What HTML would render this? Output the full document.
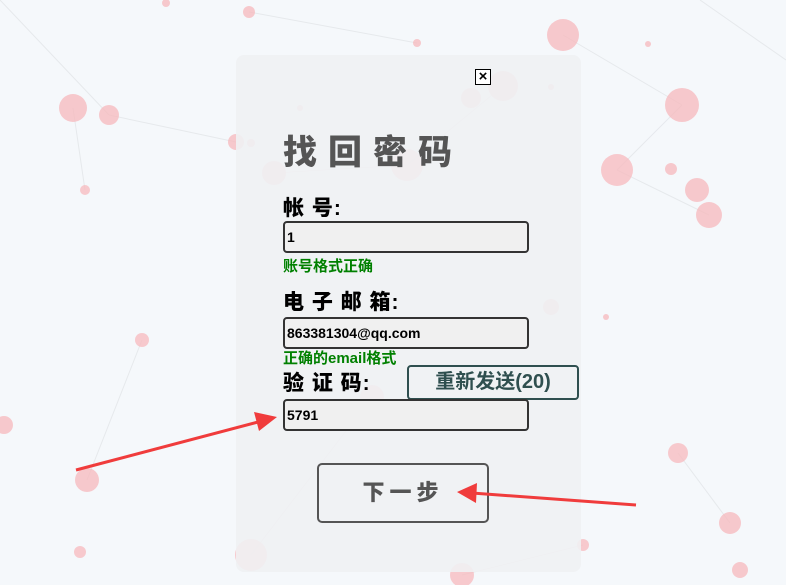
<!DOCTYPE html>
<html><head><meta charset="utf-8"><style>
*{margin:0;padding:0;box-sizing:border-box}
body{width:786px;height:585px;overflow:hidden;background:#f5f8fb;position:relative;font-family:"Liberation Sans","Noto Sans CJK SC",sans-serif}
svg.bg{position:absolute;left:0;top:0}
.panel{position:absolute;left:236px;top:55px;width:345px;height:517px;background:rgba(240,241,243,0.9);border-radius:8px}
.abs{position:absolute}
.close{left:475px;top:69px;width:16px;height:16px;border:1.5px solid #000;background:#fff;font-size:15px;line-height:13px;text-align:center;font-weight:900}
h1{position:absolute;left:283px;top:130px;font-size:34px;color:#555;letter-spacing:11px;font-weight:900;line-height:46px;white-space:nowrap}
.lbl{position:absolute;left:283px;font-size:21px;font-weight:900;color:#000;letter-spacing:1px;line-height:26px;white-space:nowrap}
.inp{position:absolute;left:283px;width:246px;height:32px;border:2px solid #333;border-radius:4px;background:#f0f0f0;font-size:14px;font-weight:bold;padding-left:2px;line-height:28px}
.ok{position:absolute;left:283px;font-size:15px;color:#008000;font-weight:bold;line-height:16px;white-space:nowrap}
.resend{left:407px;top:365px;width:172px;height:35px;border:2px solid #2f4f4f;border-radius:4px;font-size:20px;font-weight:bold;color:#2f4f4f;text-align:center;line-height:31px}
.next{left:317px;top:463px;width:172px;height:60px;border:2px solid #555;border-radius:5px;font-size:22px;font-weight:900;color:#555;text-align:center;line-height:56px;letter-spacing:5px}
</style></head><body>
<svg class="bg" width="786" height="585">
<g stroke="#e6e9ec" stroke-width="1">
<line x1="563" y1="35" x2="682" y2="105"/><line x1="682" y1="105" x2="617" y2="170"/><line x1="617" y1="170" x2="709" y2="215"/><line x1="503" y1="86" x2="407" y2="165"/><line x1="109" y1="115" x2="236" y2="142"/><line x1="73" y1="108" x2="85" y2="190"/><line x1="274" y1="173" x2="407" y2="165"/><line x1="142" y1="340" x2="87" y2="480"/><line x1="678" y1="453" x2="730" y2="523"/><line x1="251" y1="555" x2="372" y2="397"/><line x1="462" y1="575" x2="583" y2="545"/><line x1="249" y1="12" x2="417" y2="43"/><line x1="0" y1="0" x2="109" y2="115"/><line x1="700" y1="0" x2="786" y2="60"/>
</g>
<g fill="#f7b9bd" opacity="0.75">
<circle cx="563" cy="35" r="16"/><circle cx="682" cy="105" r="17"/><circle cx="617" cy="170" r="16"/><circle cx="697" cy="190" r="12"/><circle cx="709" cy="215" r="13"/><circle cx="503" cy="86" r="15"/><circle cx="471" cy="98" r="10"/><circle cx="407" cy="165" r="16"/><circle cx="274" cy="173" r="12"/><circle cx="236" cy="142" r="8"/><circle cx="251" cy="143" r="4"/><circle cx="109" cy="115" r="10"/><circle cx="73" cy="108" r="14"/><circle cx="85" cy="190" r="5"/><circle cx="249" cy="12" r="6"/><circle cx="142" cy="340" r="7"/><circle cx="551" cy="307" r="8"/><circle cx="372" cy="397" r="12"/><circle cx="87" cy="480" r="12"/><circle cx="678" cy="453" r="10"/><circle cx="730" cy="523" r="11"/><circle cx="251" cy="555" r="16"/><circle cx="583" cy="545" r="6"/><circle cx="462" cy="575" r="12"/><circle cx="80" cy="552" r="6"/><circle cx="740" cy="570" r="8"/><circle cx="4" cy="425" r="9"/><circle cx="417" cy="43" r="4"/><circle cx="551" cy="87" r="3"/><circle cx="648" cy="44" r="3"/><circle cx="606" cy="317" r="3"/><circle cx="671" cy="169" r="6"/><circle cx="166" cy="3" r="4"/><circle cx="300" cy="108" r="3"/>
</g>
</svg>
<div class="panel"></div>
<div class="abs close">×</div>
<h1>找回密码</h1>
<div class="lbl" style="top:196px">帐 号:</div>
<div class="inp" style="top:221px">1</div>
<div class="ok" style="top:259px">账号格式正确</div>
<div class="lbl" style="top:290px">电 子 邮 箱:</div>
<div class="inp" style="top:317px">863381304@qq.com</div>
<div class="ok" style="top:351px">正确的email格式</div>
<div class="lbl" style="top:371px">验 证 码:</div>
<div class="abs resend">重新发送(20)</div>
<div class="inp" style="top:399px">5791</div>
<div class="abs next">下一步</div>
<svg class="bg" width="786" height="585">
<g fill="#f03c3c" stroke="#f03c3c">
<line x1="76" y1="470" x2="262" y2="421" stroke-width="3"/>
<polygon points="277,417 254,412 259,431" stroke="none"/>
<line x1="636" y1="505" x2="472" y2="493" stroke-width="3"/>
<polygon points="457,492 477,483 476,503" stroke="none"/>
</g>
</svg>
</body></html>
